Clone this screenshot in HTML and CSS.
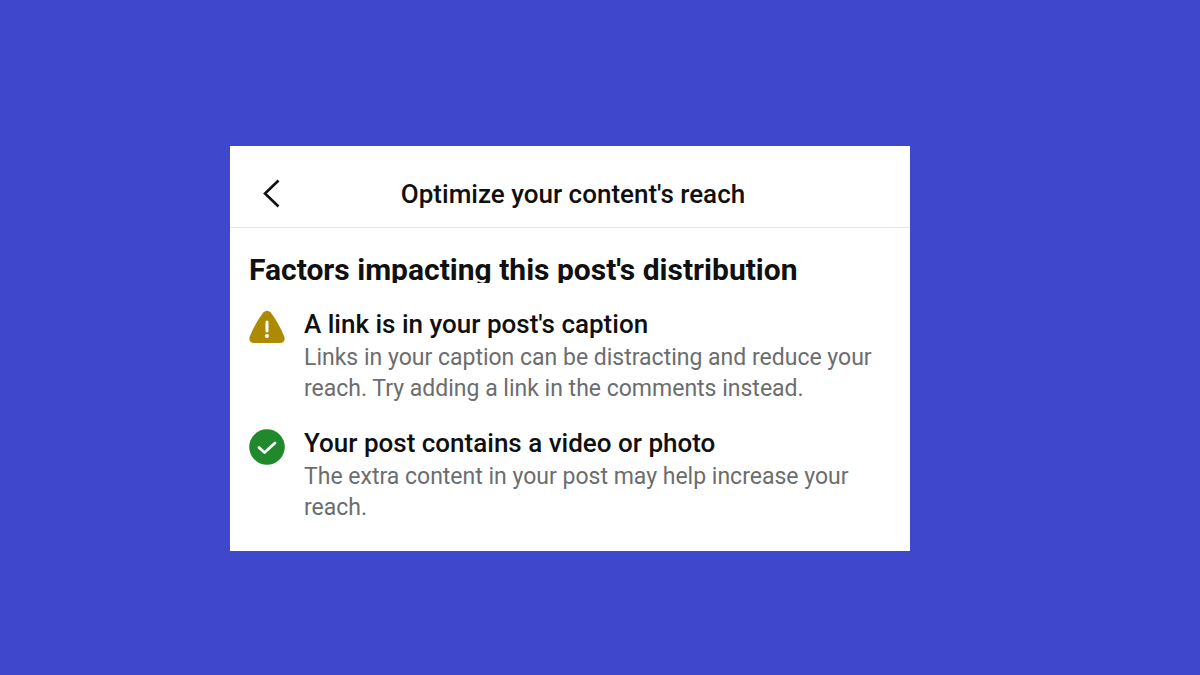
FILE: index.html
```html
<!DOCTYPE html>
<html lang="en">
<head>
<meta charset="utf-8">
<meta name="viewport" content="width=device-width, initial-scale=1">
<title>Optimize your content's reach</title>
<link rel="stylesheet" href="styles.css">
</head>
<body>
<main class="card">
  <header class="header">
    <button class="back" type="button" aria-label="Back">
      <svg width="20" height="30" viewBox="0 0 20 30" fill="none" stroke="#101010" stroke-width="2.6" aria-hidden="true"><path d="M16.500 1.500 3 14.500 16.500 27.500"/></svg>
    </button>
    <h1 class="title">Optimize your content's reach</h1>
  </header>
  <section class="body">
    <h2 class="heading">Factors impacting this post's distribution</h2>
    <ul class="factors">
      <li class="factor">
        <svg class="icon" width="36" height="36" viewBox="0 0 36 36" aria-hidden="true">
          <path d="M14.200 2.500Q18 -1 21.800 2.500Q30 13.500 35.200 26.500Q37 32.500 31 33H5Q-1 32.500.8 26.500Q6 13.500 14.200 2.500Z" fill="#ad8b00"/>
          <path d="M18 12v9" stroke="#fff" stroke-width="3" stroke-linecap="round"/>
          <circle cx="18" cy="26" r="2" fill="#fff"/>
        </svg>
        <div class="text">
          <h3 class="name">A link is in your post's caption</h3>
          <p class="detail">Links in your caption can be distracting and reduce your reach. Try adding a link in the comments instead.</p>
        </div>
      </li>
      <li class="factor">
        <svg class="icon" width="36" height="36" viewBox="0 0 36 36" aria-hidden="true">
          <circle cx="18" cy="18" r="17.800" fill="#20892b"/>
          <path d="m10 18.500 5.500 5 10.500-9.500" fill="none" stroke="#fff" stroke-width="2.800" stroke-linecap="round" stroke-linejoin="round"/>
        </svg>
        <div class="text">
          <h3 class="name">Your post contains a video or photo</h3>
          <p class="detail">The extra content in your post may help increase your reach.</p>
        </div>
      </li>
    </ul>
  </section>
</main>
</body>
</html>
```
FILE: styles.css
```css
* {
  box-sizing: border-box;
}

body {
  margin: 0;
  min-height: 100vh;
  padding: 146px 290px 124px 230px;
  background: #3f47cc;
  color: #101010;
  font-family: Roboto, "Liberation Sans", sans-serif;
}

h1, h2, h3, p, ul {
  margin: 0;
  padding: 0;
}

.card {
  background: #fff;
}

.header {
  display: grid;
  grid-template-columns: 20px 1fr 14px;
  align-items: center;
  padding: 32px 32px 17px;
  border-bottom: 1px solid #e6e6e8;
}

.back {
  display: flex;
  padding: 0;
  border: 0;
  background: none;
  cursor: pointer;
}

.title {
  font-size: 26px;
  line-height: 32px;
  font-weight: 500;
  text-align: center;
}

.body {
  padding: 29px 19px 28px;
}

.heading {
  overflow: hidden;
  font-size: 30px;
  line-height: 26px;
  font-weight: 700;
}

.factors {
  display: flex;
  flex-direction: column;
  gap: 23px;
  margin-top: 25px;
  list-style: none;
}

.factor {
  display: flex;
  gap: 19px;
}

.icon {
  flex: none;
  margin-top: 2px;
}

.name {
  font-size: 26px;
  line-height: 32px;
  font-weight: 500;
}

.detail {
  margin-top: 2px;
  color: #6b6d6f;
  font-size: 23px;
  line-height: 31px;
}
```
